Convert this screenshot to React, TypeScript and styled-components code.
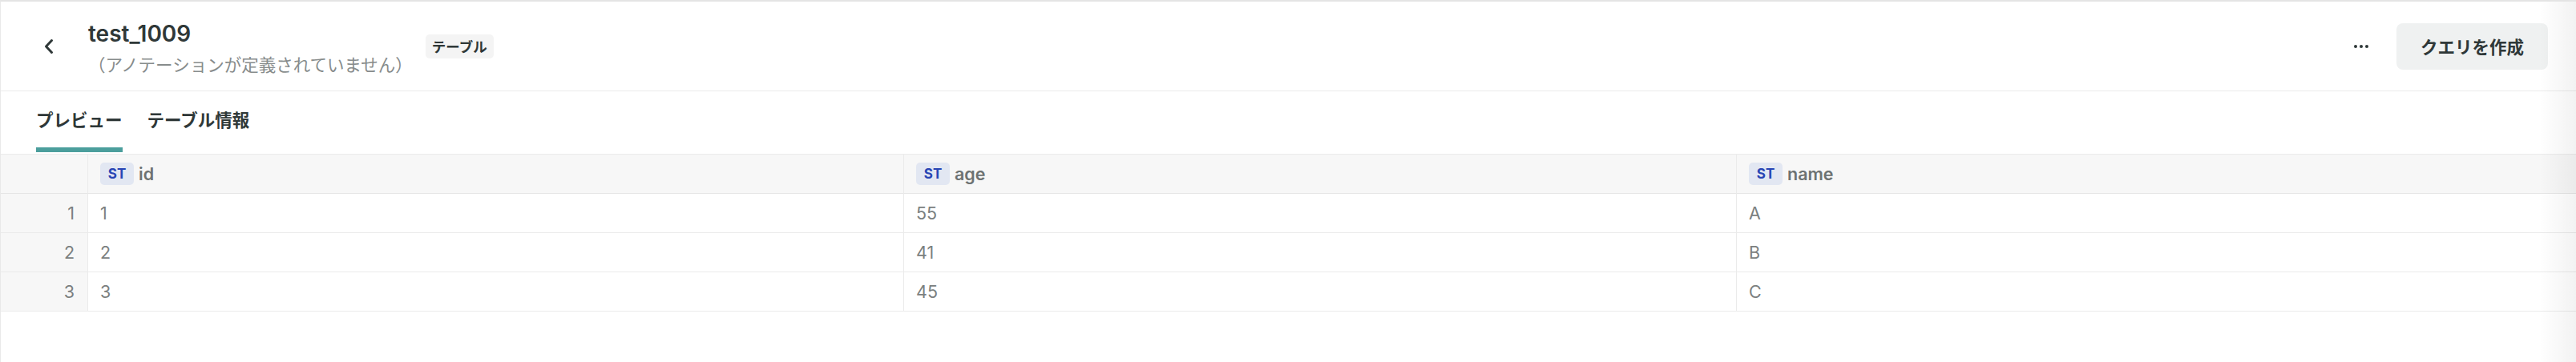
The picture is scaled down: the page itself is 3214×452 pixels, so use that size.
import React from 'react'
import styled, { createGlobalStyle } from 'styled-components'

const GlobalStyle = createGlobalStyle`
  html, body {
    margin: 0;
    padding: 0;
    background: #ffffff;
  }
  body {
    font-family: Inter, "Noto Sans CJK JP", sans-serif;
    color: #2f3838;
  }
  * {
    box-sizing: border-box;
  }
`

const Page = styled.div`
  position: relative;
  height: 452px;
  border-top: 2px solid #e4e4e4;
  border-left: 1px solid #e9e9e9;
  overflow: hidden;
`

const EdgeShadow = styled.div`
  position: absolute;
  top: 0;
  right: 0;
  bottom: 0;
  width: 46px;
  pointer-events: none;
  background: linear-gradient(to right, rgba(0, 0, 0, 0), rgba(0, 0, 0, 0.05));
`

const Header = styled.header`
  display: flex;
  align-items: center;
  height: 112px;
  padding: 0 35px 0 40px;
  border-bottom: 1px solid #ebebeb;
`

const BackButton = styled.button`
  display: flex;
  align-items: center;
  justify-content: center;
  width: 40px;
  height: 40px;
  padding: 0;
  border: none;
  background: transparent;
  color: #2f3838;
  cursor: pointer;
`

const TitleBlock = styled.div`
  display: flex;
  flex-direction: column;
  margin-left: 29px;
  padding-top: 4px;
`

const Title = styled.h1`
  margin: 0;
  font-size: 28px;
  line-height: 36px;
  font-weight: 600;
  color: #2f3838;
`

const Subtitle = styled.div`
  margin-top: 6px;
  font-size: 21.5px;
  line-height: 30px;
  font-weight: 400;
  color: #878c8c;
`

const KindBadge = styled.span`
  display: inline-flex;
  align-items: center;
  height: 30px;
  margin-left: 16px;
  padding: 0 8px;
  border-radius: 5px;
  background: #f4f4f4;
  font-size: 17.5px;
  font-weight: 600;
  color: #2f3838;
`

const Actions = styled.div`
  display: flex;
  align-items: center;
  gap: 24px;
  margin-left: auto;
`

const MoreButton = styled.button`
  display: flex;
  align-items: center;
  justify-content: center;
  width: 40px;
  height: 40px;
  padding: 0;
  border: none;
  background: transparent;
  color: #2f3838;
`

const PrimaryButton = styled.button`
  height: 58px;
  padding: 0 30px;
  border: none;
  border-radius: 8px;
  background: #eff1f1;
  font-family: Inter, "Noto Sans CJK JP", sans-serif;
  font-size: 21.5px;
  font-weight: 700;
  color: #2f3838;
`

const TabBar = styled.nav`
  display: flex;
  align-items: flex-end;
  gap: 31px;
  height: 78px;
  padding: 0 0 2px 44px;
`

const Tab = styled.div<{ $active?: boolean }>`
  display: flex;
  align-items: center;
  height: 100%;
  padding-bottom: 2px;
  border-bottom: 6px solid ${(p) => (p.$active ? '#4b9e9c' : 'transparent')};
  font-size: 21.5px;
  font-weight: 700;
  color: #2f3838;
`

const Grid = styled.div`
  display: grid;
  grid-template-columns: 109px 1018px 1039px 1fr;
  border-top: 1px solid #ebebeb;
`

const HeadCell = styled.div`
  display: flex;
  align-items: center;
  gap: 6px;
  height: 49px;
  padding-left: 15px;
  background: #f7f7f7;
  border-bottom: 1px solid #e6e6e6;
  border-right: 1px solid #ebebeb;
  font-size: 21.5px;
  font-weight: 600;
  color: #6d7272;

  &:nth-child(4n) {
    border-right: none;
  }
`

const TypeBadge = styled.span`
  display: inline-flex;
  align-items: center;
  justify-content: center;
  width: 42px;
  height: 28px;
  border-radius: 5px;
  background: #e2e7f2;
  font-size: 17px;
  font-weight: 700;
  color: #2845b4;
`

const RowNumber = styled.div`
  display: flex;
  align-items: center;
  justify-content: flex-end;
  height: 49px;
  padding-right: 16px;
  background: #f7f7f7;
  border-bottom: 1px solid #ebebeb;
  border-right: 1px solid #ebebeb;
  font-size: 21.5px;
  color: #7b8080;
`

const Cell = styled.div<{ $last?: boolean }>`
  display: flex;
  align-items: center;
  height: 49px;
  padding-left: 15px;
  border-bottom: 1px solid #ebebeb;
  border-right: ${(p) => (p.$last ? 'none' : '1px solid #ebebeb')};
  font-size: 21.5px;
  color: #7b8080;
`

const columns = ['id', 'age', 'name']

const rows = [
  ['1', '55', 'A'],
  ['2', '41', 'B'],
  ['3', '45', 'C'],
]

function ChevronLeft() {
  return (
    <svg width="14" height="20" viewBox="0 0 14 20" fill="none">
      <path d="M10.5 2.5 L3.5 10 L10.5 17.5" stroke="currentColor" strokeWidth="3" strokeLinecap="round" strokeLinejoin="round" />
    </svg>
  )
}

function Dots() {
  return (
    <svg width="20" height="6" viewBox="0 0 20 6" fill="currentColor">
      <circle cx="3" cy="3" r="2" />
      <circle cx="10" cy="3" r="2" />
      <circle cx="17" cy="3" r="2" />
    </svg>
  )
}

export default function App() {
  return (
    <>
      <GlobalStyle />
      <Page>
        <Header>
          <BackButton aria-label="戻る">
            <ChevronLeft />
          </BackButton>
          <TitleBlock>
            <Title>test_1009</Title>
            <Subtitle>（アノテーションが定義されていません）</Subtitle>
          </TitleBlock>
          <KindBadge>テーブル</KindBadge>
          <Actions>
            <MoreButton aria-label="その他">
              <Dots />
            </MoreButton>
            <PrimaryButton>クエリを作成</PrimaryButton>
          </Actions>
        </Header>
        <TabBar>
          <Tab $active>プレビュー</Tab>
          <Tab>テーブル情報</Tab>
        </TabBar>
        <Grid>
          <HeadCell />
          {columns.map((c) => (
            <HeadCell key={c}>
              <TypeBadge>ST</TypeBadge>
              {c}
            </HeadCell>
          ))}
          {rows.map((r, i) => (
            <React.Fragment key={i}>
              <RowNumber>{i + 1}</RowNumber>
              {r.map((v, j) => (
                <Cell key={j} $last={j === r.length - 1}>
                  {v}
                </Cell>
              ))}
            </React.Fragment>
          ))}
        </Grid>
        <EdgeShadow />
      </Page>
    </>
  )
}
